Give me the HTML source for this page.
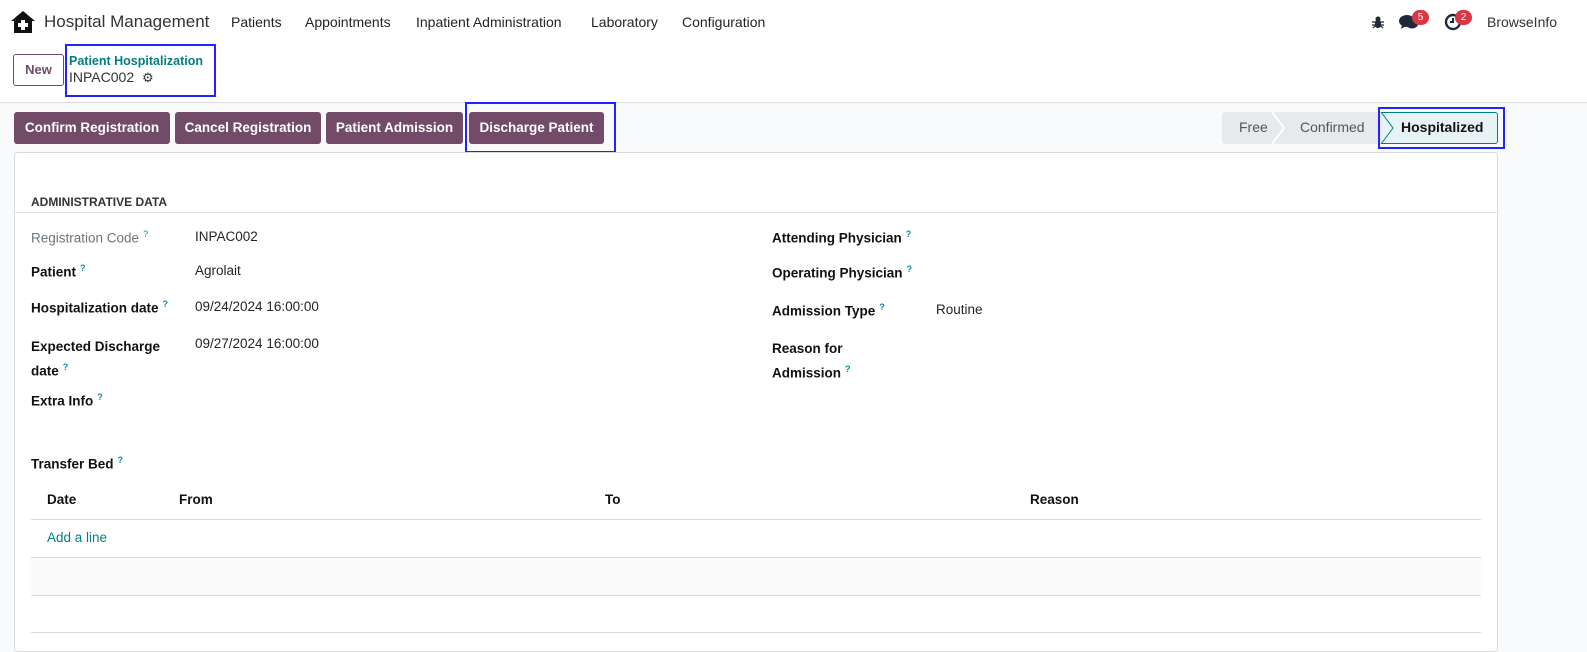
<!DOCTYPE html>
<html><head><meta charset="utf-8"><style>
*{margin:0;padding:0;box-sizing:border-box}
body{width:1587px;height:643px;overflow:hidden;font-family:"Liberation Sans",sans-serif;font-size:13.5px;color:#212529;background:#f9fafb;position:relative}
.a{position:absolute;white-space:nowrap}
.top{position:absolute;left:0;top:0;width:1587px;height:103px;background:#fff;border-bottom:1px solid #d8dadd}
.btn{position:absolute;top:112px;height:32px;background:#714b67;color:#fff;font-weight:bold;border-radius:3px;font-size:13.5px;line-height:32px;text-align:center}
.sheet{position:absolute;left:14px;top:152px;width:1484px;height:500px;background:#fff;border:1px solid #d8dadd;border-radius:3px}
.lbl{font-weight:bold;color:#111}
.q{color:#0f8ba0;font-size:9px;vertical-align:super;margin-left:4px}
.hl{position:absolute;border:2px solid #2323ff}
.line{position:absolute;left:31px;width:1450px;height:1px;background:#dcdcdc}
</style></head><body>
<div class="top"></div>
<svg class="a" style="left:11px;top:11px" width="24" height="22" viewBox="0 0 24 22"><path d="M12 0L0 10h3v12h18V10h3z" fill="#111"/><path d="M10 9h4v3h3v4h-3v3h-4v-3H7v-4h3z" fill="#fff"/></svg>
<div class="a" style="left:44px;top:12px;font-size:17px;color:#333">Hospital Management</div>
<div class="a" style="left:231px;top:14px;font-size:14px">Patients</div>
<div class="a" style="left:305px;top:14px;font-size:14px">Appointments</div>
<div class="a" style="left:416px;top:14px;font-size:14px">Inpatient Administration</div>
<div class="a" style="left:591px;top:14px;font-size:14px">Laboratory</div>
<div class="a" style="left:682px;top:14px;font-size:14px">Configuration</div>
<svg class="a" style="left:1372px;top:16px" width="12" height="13" viewBox="0 0 12 13"><circle cx="6" cy="3" r="2.5" fill="#1e2a3a"/><rect x="3" y="4" width="6" height="8" rx="2.5" fill="#1e2a3a"/><path d="M0 6h12M0 9h12M1 12l2-2M11 12l-2-2" stroke="#1e2a3a" stroke-width="1.2"/></svg>
<svg class="a" style="left:1399px;top:14px" width="20" height="17" viewBox="0 0 20 17"><ellipse cx="8" cy="7" rx="8" ry="6" fill="#1e2a3a"/><path d="M3 11l-1 4 5-3z" fill="#1e2a3a"/><ellipse cx="13" cy="10" rx="6" ry="4.5" fill="#1e2a3a"/></svg>
<div class="a" style="left:1412px;top:10px;width:17px;height:15px;border-radius:8px;background:#dc3545;color:#fff;font-size:10px;text-align:center;line-height:15px">5</div>
<svg class="a" style="left:1444px;top:13px" width="18" height="18" viewBox="0 0 18 18"><circle cx="9" cy="9" r="7" fill="none" stroke="#1e2a3a" stroke-width="2.4"/><path d="M9 5v4H6" fill="none" stroke="#1e2a3a" stroke-width="2"/></svg>
<div class="a" style="left:1455px;top:10px;width:17px;height:15px;border-radius:8px;background:#dc3545;color:#fff;font-size:10px;text-align:center;line-height:15px">2</div>
<div class="a" style="left:1487px;top:14px;font-size:14px;color:#333">BrowseInfo</div>

<div class="a" style="left:13px;top:54px;width:51px;height:32px;border:1px solid #714b67;border-radius:3px;color:#714b67;font-weight:bold;text-align:center;line-height:30px;font-size:13px">New</div>
<div class="a" style="left:69px;top:54px;font-size:12.5px;color:#017e84;font-weight:bold">Patient Hospitalization</div>
<div class="a" style="left:69px;top:69px;font-size:14px;color:#333">INPAC002 <span style="font-size:13px;margin-left:4px">⚙</span></div>
<div class="hl" style="left:65px;top:44px;width:151px;height:53px"></div>

<div class="btn" style="left:14px;width:156px">Confirm Registration</div>
<div class="btn" style="left:175px;width:146px">Cancel Registration</div>
<div class="btn" style="left:326px;width:137px">Patient Admission</div>
<div class="btn" style="left:469px;width:135px">Discharge Patient</div>
<div class="hl" style="left:465px;top:102px;width:151px;height:51px"></div>

<div class="a" style="left:1222px;top:112px;width:160px;height:32px;background:#e7e9ed;border-radius:3px 0 0 3px"></div>
<svg class="a" style="left:1270px;top:112px" width="16" height="32"><path d="M2 0l12 16L2 32" fill="none" stroke="#fff" stroke-width="2"/></svg>
<div class="a" style="left:1239px;top:119px;color:#555;font-size:14px">Free</div>
<div class="a" style="left:1300px;top:119px;color:#555;font-size:14px">Confirmed</div>
<div class="a" style="left:1381px;top:112px;width:117px;height:32px;background:#e6f2f3;border:1px solid #017e84;border-left:none;border-radius:0 3px 3px 0"></div>
<svg class="a" style="left:1380px;top:112px" width="16" height="32"><path d="M1 0l12 16L1 32" fill="none" stroke="#017e84" stroke-width="1"/></svg>
<div class="a" style="left:1401px;top:119px;font-weight:bold;color:#111;font-size:14px">Hospitalized</div>
<div class="hl" style="left:1378px;top:107px;width:127px;height:42px"></div>

<div class="sheet"></div>
<div class="a" style="left:31px;top:195px;font-weight:bold;font-size:12px;color:#333">ADMINISTRATIVE DATA</div>
<div class="a" style="left:15px;top:212px;width:1482px;height:1px;background:#dee2e6"></div>
<div class="a" style="left:31px;top:229px;color:#6c757d">Registration Code<span class="q">?</span></div>
<div class="a" style="left:195px;top:229px">INPAC002</div>
<div class="a lbl" style="left:31px;top:263px">Patient<span class="q">?</span></div>
<div class="a" style="left:195px;top:263px">Agrolait</div>
<div class="a lbl" style="left:31px;top:299px">Hospitalization date<span class="q">?</span></div>
<div class="a" style="left:195px;top:299px">09/24/2024 16:00:00</div>
<div class="a lbl" style="left:31px;top:336px;line-height:21px;white-space:normal;width:150px">Expected Discharge date<span class="q">?</span></div>
<div class="a" style="left:195px;top:336px">09/27/2024 16:00:00</div>
<div class="a lbl" style="left:31px;top:392px">Extra Info<span class="q">?</span></div>
<div class="a lbl" style="left:772px;top:229px">Attending Physician<span class="q">?</span></div>
<div class="a lbl" style="left:772px;top:264px">Operating Physician<span class="q">?</span></div>
<div class="a lbl" style="left:772px;top:302px">Admission Type<span class="q">?</span></div>
<div class="a" style="left:936px;top:302px">Routine</div>
<div class="a lbl" style="left:772px;top:338px;line-height:21px">Reason for<br>Admission<span class="q">?</span></div>
<div class="a lbl" style="left:31px;top:455px">Transfer Bed<span class="q">?</span></div>
<div class="a lbl" style="left:47px;top:492px">Date</div>
<div class="a lbl" style="left:179px;top:492px">From</div>
<div class="a lbl" style="left:605px;top:492px">To</div>
<div class="a lbl" style="left:1030px;top:492px">Reason</div>
<div class="line" style="top:519px"></div>
<div class="a" style="left:47px;top:530px;color:#017e84">Add a line</div>
<div class="a" style="left:31px;top:557px;width:1450px;height:38px;background:#fafafa"></div>
<div class="line" style="top:557px"></div>
<div class="line" style="top:595px"></div>
<div class="line" style="top:632px"></div>
</body></html>
